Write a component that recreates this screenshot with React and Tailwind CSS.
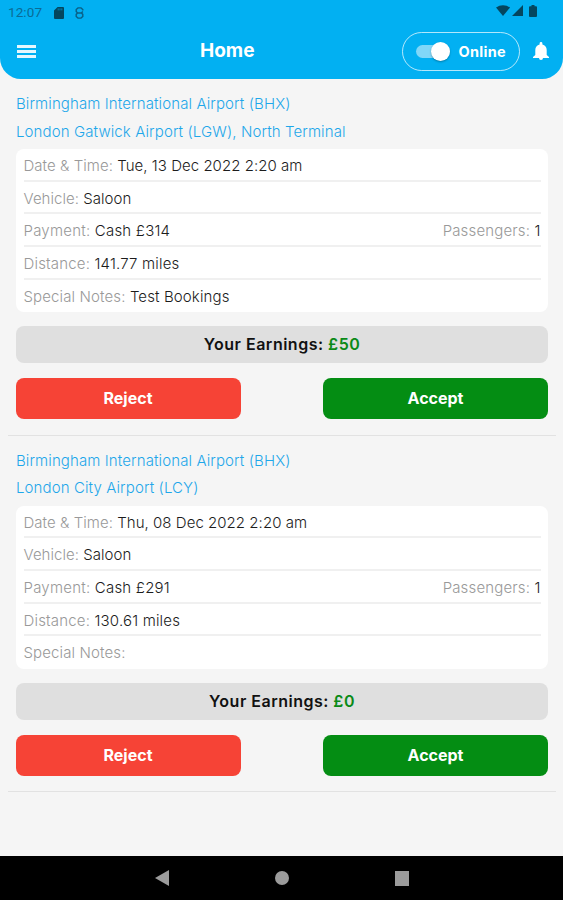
const bookings = [
  {
    id: 1,
    from: 'Birmingham International Airport (BHX)',
    to: 'London Gatwick Airport (LGW), North Terminal',
    date: 'Tue, 13 Dec 2022 2:20 am',
    vehicle: 'Saloon',
    payment: 'Cash £314',
    passengers: 1,
    distance: '141.77 miles',
    notes: 'Test Bookings',
    earnings: '£50',
  },
  {
    id: 2,
    from: 'Birmingham International Airport (BHX)',
    to: 'London City Airport (LCY)',
    date: 'Thu, 08 Dec 2022 2:20 am',
    vehicle: 'Saloon',
    payment: 'Cash £291',
    passengers: 1,
    distance: '130.61 miles',
    notes: '',
    earnings: '£0',
  },
];

function StatusBar() {
  return (
    <div className="flex h-6 items-center justify-between pl-2 pr-[26px] text-[#04465f]">
      <div className="flex items-center">
        <span className="w-[46px] font-[Roboto] text-[13.5px] leading-6 tracking-[0.1px] text-[#0a6c96]">12:07</span>
        <svg className="mt-px h-3 w-[10px]" viewBox="0 0 10 12" fill="currentColor">
          <path d="M3.6 0H9a1 1 0 0 1 1 1v10a1 1 0 0 1-1 1H1a1 1 0 0 1-1-1V3.6z" />
          <path d="M4.2 1.4v2M6 1.4v2M7.8 1.4v2" stroke="#02b0f2" strokeWidth=".6" />
        </svg>
        <svg className="ml-[11px] mt-px h-3 w-[9px] text-[#0a5f85]" viewBox="0 0 9 12" fill="none" stroke="currentColor" strokeWidth="1.4">
          <path d="M7.8 3.6V2.6L6 .9H3L1.2 2.6v1.8L2.6 6h3.8l1.400 1.400v2L6 11.100H3L1.200 9.400V7.400L2.600 6M6.400 6l1.400-1.400" />
        </svg>
      </div>
      <div className="-mt-[3px] flex items-center">
        <svg className="h-[11px] w-[14px]" viewBox="0 0 14 11" fill="currentColor">
          <path d="M0 2.6C4-.7 10-.7 14 2.6L7 11z" />
        </svg>
        <svg className="ml-[2px] h-[11px] w-[11px]" viewBox="0 0 11 11" fill="currentColor">
          <path d="M11 0v11H0z" />
        </svg>
        <svg className="ml-[6px] h-3 w-2" viewBox="0 0 8 12" fill="currentColor">
          <path d="M2.5 0h3v1.3H7a1 1 0 0 1 1 1V11a1 1 0 0 1-1 1H1a1 1 0 0 1-1-1V2.3a1 1 0 0 1 1-1h1.5z" />
        </svg>
      </div>
    </div>
  );
}

function Header() {
  return (
    <header className="h-[79px] shrink-0 rounded-b-[21px] bg-[#02b0f2]">
      <StatusBar />
      <div className="flex h-[54px] items-center pl-[17px] pr-[14.5px] text-white">
        <button className="flex w-[183px] flex-col gap-[2px]">
          <span className="h-[3px] w-[19px] bg-white/90" />
          <span className="h-[3px] w-[19px] bg-white/90" />
          <span className="h-[3px] w-[19px] bg-white/90" />
        </button>
        <h1 className="flex-1 text-[19px] font-bold leading-6">Home</h1>
        <div className="flex h-[39px] w-[118px] items-center rounded-full border-[1.5px] border-white/70 pl-[13px]">
          <button className="flex h-[13px] w-[34px] items-center justify-end rounded-full bg-[#80d7f8]">
            <span className="size-[19px] shrink-0 rounded-full bg-white shadow-[0_1px_2px_rgba(0,0,0,0.3)]" />
          </button>
          <span className="ml-[9px] pt-px text-[14.5px] font-bold leading-5 tracking-[0.3px]">Online</span>
        </div>
        <svg className="ml-[13px] h-[18px] w-4" viewBox="0 0 16 18" fill="currentColor">
          <path d="M8 18a2 2 0 0 0 2-2H6a2 2 0 0 0 2 2zM13.7 13V8c0-2.9-1.6-5-4.3-5.6V1.4a1.4 1.4 0 0 0-2.8 0v1C3.9 3 2.3 5.1 2.3 8v5L0 15v1h16v-1z" />
        </svg>
      </div>
    </header>
  );
}

function Row({ label, value, tracking = 'tracking-[0.12px]', children }) {
  return (
    <div className={`flex h-[32.7px] items-center justify-between border-b-2 border-[#f0f0f0] pt-[3px] last:border-transparent ${tracking}`}>
      <p>
        <span className="text-[#999999]">{label}:</span> <span>{value}</span>
      </p>
      {children}
    </div>
  );
}

function Booking({ booking }) {
  return (
    <section className="ml-2 mr-[7px] h-[356.7px] border-b border-[#e2e2e2] px-2 pt-[11px]">
      <div className="text-[15px] font-light leading-[27.5px] tracking-[0.11px] text-[#1ea7ea]">
        <p>{booking.from}</p>
        <p>{booking.to}</p>
      </div>
      <div className="mt-1 rounded-lg bg-white px-[7.5px] text-[15px] font-light leading-5 text-[#1c1c1c]">
        <Row label="Date & Time" value={booking.date} tracking="tracking-[0.04px]" />
        <Row label="Vehicle" value={booking.vehicle} tracking="tracking-[0.04px]" />
        <Row label="Payment" value={booking.payment} tracking="tracking-[0.22px]">
          <p className="tracking-[0.15px]">
            <span className="text-[#999999]">Passengers:</span> <span>{booking.passengers}</span>
          </p>
        </Row>
        <Row label="Distance" value={booking.distance} tracking="tracking-[0.18px]" />
        <Row label="Special Notes" value={booking.notes} />
      </div>
      <div className="mt-[13.5px] flex h-[37px] items-center justify-center rounded-lg bg-[#dfdfdf] text-[16px] font-semibold tracking-[0.5px] text-[#111111]">
        <p>
          Your Earnings: <span className="text-[#0a8a17]">{booking.earnings}</span>
        </p>
      </div>
      <div className="mt-[15px] flex justify-between text-[16px] font-bold text-white">
        <button className="h-[41.5px] w-[225px] rounded-lg bg-[#f64336] pb-px pr-px">Reject</button>
        <button className="h-[41.5px] w-[225px] rounded-lg bg-[#048d13] pb-px">Accept</button>
      </div>
    </section>
  );
}

function NavBar() {
  return (
    <nav className="flex h-11 shrink-0 items-center justify-center gap-[106px] bg-black text-[#9b9b9b]">
      <svg className="h-4 w-[14px]" viewBox="0 0 14 16" fill="currentColor">
        <path d="M14 0v16L0 8z" />
      </svg>
      <span className="size-[14px] rounded-full bg-[#9b9b9b]" />
      <span className="h-[15px] w-[14px] bg-[#9b9b9b]" />
    </nav>
  );
}

export default function App() {
  return (
    <div className="flex h-[900px] w-[563px] flex-col overflow-hidden bg-[#f5f5f5] font-['Inter',sans-serif]">
      <Header />
      <main className="flex-1">
        {bookings.map((booking) => (
          <Booking key={booking.id} booking={booking} />
        ))}
      </main>
      <NavBar />
    </div>
  );
}
